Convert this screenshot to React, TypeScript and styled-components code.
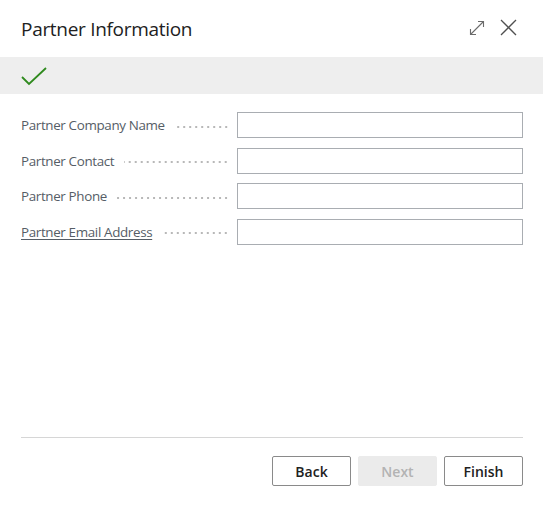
import React from 'react';
import styled, { createGlobalStyle } from 'styled-components';

const GlobalStyle = createGlobalStyle`
	html, body {
		margin: 0;
		padding: 0;
		background: #ffffff;
	}
	body {
		font-family: 'Open Sans', 'Noto Sans', sans-serif;
		color: #212121;
	}
`;

const fields = [
	{ label: 'Partner Company Name', link: false },
	{ label: 'Partner Contact', link: false },
	{ label: 'Partner Phone', link: false },
	{ label: 'Partner Email Address', link: true },
];

function App() {
	return (
		<Dialog>
			<GlobalStyle />
			<Header>
				<Title>Partner Information</Title>
				<HeaderActions>
					<IconBtn aria-label="Expand">
						<svg width="16" height="16" viewBox="0 0 16 16" fill="none" stroke="#6b6b6b" strokeWidth="1.1">
							<path d="M1.5 14.5 L14.5 1.5" />
							<path d="M9 1.5 H14.5 V7" />
							<path d="M1.5 9 V14.5 H7" />
						</svg>
					</IconBtn>
					<IconBtn aria-label="Close">
						<svg width="17" height="17" viewBox="0 0 17 17" fill="none" stroke="#505050" strokeWidth="1.3">
							<path d="M1 1 L16 16" />
							<path d="M16 1 L1 16" />
						</svg>
					</IconBtn>
				</HeaderActions>
			</Header>
			<StatusBar>
				<svg width="26" height="20" viewBox="0 0 26 20" fill="none" stroke="#2f8a1e" strokeWidth="1.8">
					<path d="M1 11 L8 18 L25 2" />
				</svg>
			</StatusBar>
			<Form>
				{fields.map((field) => (
					<Row key={field.label}>
						<LabelCell>
							<Label $link={field.link}>{field.label}</Label>
							<Leader />
						</LabelCell>
						<Input type="text" />
					</Row>
				))}
			</Form>
			<Footer>
				<Button>Back</Button>
				<Button disabled>Next</Button>
				<Button>Finish</Button>
			</Footer>
		</Dialog>
	);
}

const Dialog = styled.div`
	display: flex;
	flex-direction: column;
	height: 100vh;
	box-sizing: border-box;
`;

const Header = styled.header`
	display: flex;
	justify-content: space-between;
	align-items: center;
	height: 57px;
	padding: 0 26px 0 21px;
	box-sizing: border-box;
`;

const Title = styled.h1`
	margin: 0;
	font-size: 19px;
	font-weight: 400;
	color: #212121;
	letter-spacing: -0.3px;
`;

const HeaderActions = styled.div`
	display: flex;
	align-items: center;
	gap: 15px;
	margin-top: -2px;
`;

const IconBtn = styled.button`
	border: none;
	background: none;
	padding: 0;
	display: flex;
	cursor: pointer;
`;

const StatusBar = styled.div`
	display: flex;
	align-items: center;
	height: 37px;
	padding: 0 21px;
	background: #eeeeee;
`;

const Form = styled.div`
	flex: 1;
	display: flex;
	flex-direction: column;
	gap: 9.6px;
	padding: 18px 20px 0 21px;
`;

const Row = styled.div`
	display: grid;
	grid-template-columns: 208px 1fr;
	column-gap: 8px;
	align-items: center;
	height: 26px;
`;

const LabelCell = styled.div`
	display: flex;
	align-items: center;
	gap: 10px;
	min-width: 0;
`;

const Label = styled.span<{ $link: boolean }>`
	font-size: 13.4px;
	letter-spacing: -0.35px;
	color: #555d66;
	white-space: nowrap;
	text-decoration: ${(p) => (p.$link ? 'underline' : 'none')};
	text-underline-offset: 2px;
`;

const Leader = styled.span`
	flex: 1;
	height: 2px;
	margin-top: 3px;
	background-image: radial-gradient(circle, #b8b8b8 0.8px, transparent 1px);
	background-size: 6px 2px;
	background-position: right center;
	background-repeat: repeat-x;
`;

const Input = styled.input`
	height: 26px;
	box-sizing: border-box;
	border: 1px solid #a9adb2;
	border-radius: 0;
	padding: 0 6px;
	font: inherit;
	font-size: 13px;
	outline: none;
`;

const Footer = styled.footer`
	display: flex;
	justify-content: flex-end;
	gap: 7px;
	margin: 1px 20px 0 21px;
	padding: 18px 0 21px;
	border-top: 1px solid #d6d6d6;
`;

const Button = styled.button`
	width: 79px;
	height: 30px;
	box-sizing: border-box;
	border: 1px solid #8a8a8a;
	border-radius: 2px;
	background: #ffffff;
	color: #212121;
	font-family: inherit;
	font-size: 14px;
	font-weight: 600;
	cursor: pointer;
	&:disabled {
		background: #ebebeb;
		border-color: #ebebeb;
		color: #b3b3b3;
		cursor: default;
	}
`;

export default App;
